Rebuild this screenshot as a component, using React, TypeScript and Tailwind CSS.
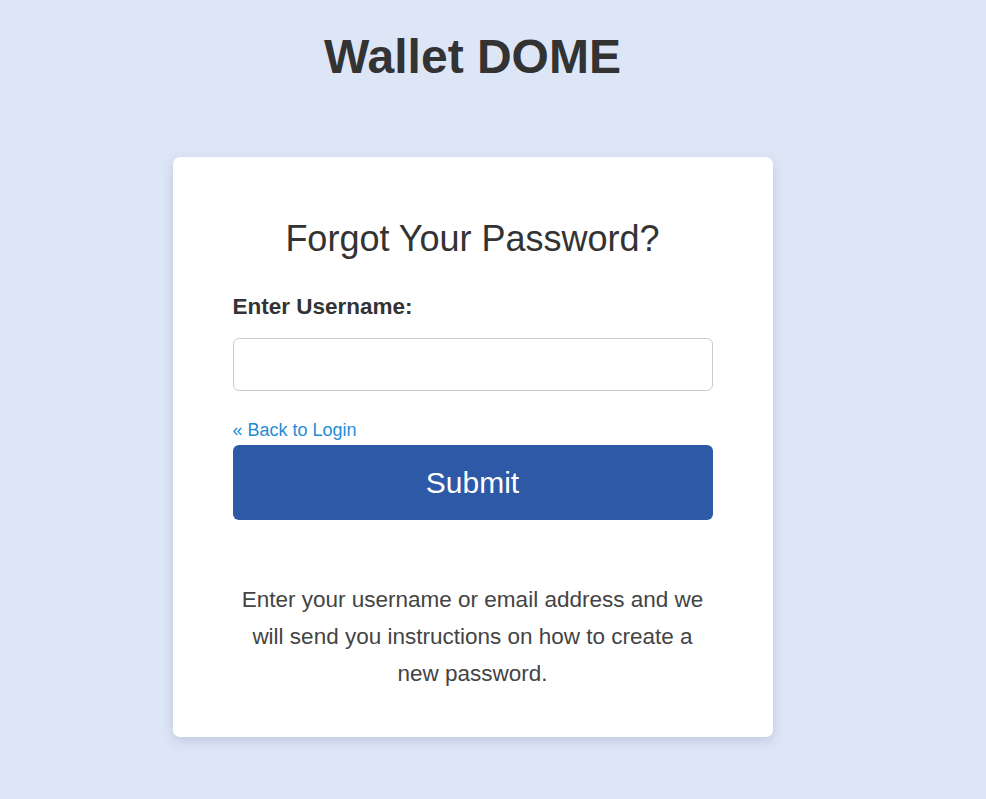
import React from "react";

export default function App() {
  return (
    <div
      className="min-h-screen w-full bg-[#dde6f6] pr-[41px]"
      style={{ fontFamily: '"Liberation Sans", Arial, sans-serif' }}
    >
      <div className="flex flex-col items-center pt-[29px] pb-[60px]">
        <h1 className="text-[48px] leading-[56px] font-bold text-[#333333]">Wallet DOME</h1>
        <div className="mt-[72px] w-[600px] rounded-[7px] bg-white px-[60px] pt-[62px] pb-[45px] shadow-[0_4px_12px_rgba(60,80,120,0.18)]">
          <h2 className="text-center text-[36px] leading-[40px] font-normal text-[#333333]">
            Forgot Your Password?
          </h2>
          <label className="mt-[35px] block text-[22.5px] leading-[26px] font-bold text-[#333333]">
            Enter Username:
          </label>
          <input
            type="text"
            className="mt-[18px] block h-[53px] w-full rounded-[6px] border border-[#cccccc] bg-white px-3 text-[18px] outline-none"
          />
          <a href="#" className="mt-[29px] block text-[18px] leading-[20px] text-[#1f8dd6]">
            « Back to Login
          </a>
          <button className="mt-[5px] flex h-[75px] w-full items-center justify-center rounded-[6px] bg-[#2d59a7] text-[30px] text-white">
            Submit
          </button>
          <p className="mt-[61px] px-[5px] text-center text-[22.5px] leading-[37px] text-[#444444]">
            Enter your username or email address and we will send you instructions on how to create a new password.
          </p>
        </div>
      </div>
    </div>
  );
}
